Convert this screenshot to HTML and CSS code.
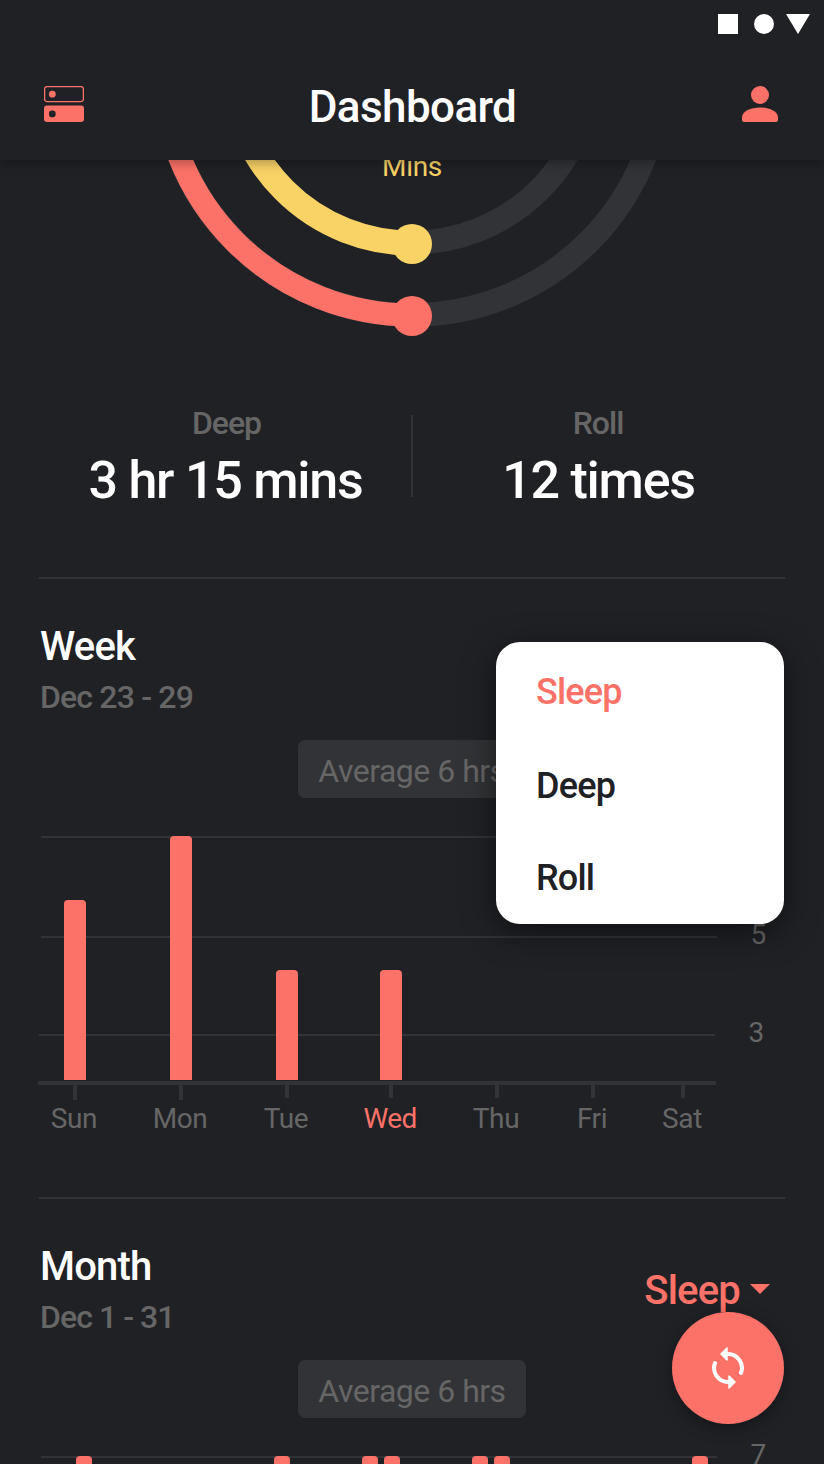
FILE: index.html
```html
<!DOCTYPE html>
<html lang="en">
<head>
<meta charset="utf-8">
<title>Dashboard</title>
<link rel="stylesheet" href="styles.css">
</head>
<body>
<div class="screen">
  <header class="header">
    <div class="status">
      <svg width="92" height="20" viewBox="0 0 92 20" fill="#fff"><path d="M0 0h20v20H0z"/><circle cx="46" cy="10" r="10"/><path d="M68 0h24L80 20z"/></svg>
    </div>
    <div class="toolbar">
      <svg class="icon-menu" width="40" height="36" viewBox="0 0 40 36"><rect x=".6" y=".6" width="38.800" height="15" rx="2.500" class="line"/><circle cx="8.300" cy="8.200" r="3.400" class="coral"/><rect y="19.500" width="40" height="16.500" rx="3" class="coral"/><circle cx="8.300" cy="27.900" r="3.400" class="hole"/></svg>
      <h1 class="title">Dashboard</h1>
      <svg class="icon-user" width="36" height="36" viewBox="0 0 36 36"><circle cx="18" cy="9" r="9" class="coral"/><path class="coral" d="M2 36Q0 36 0 34V31.500C0 25 9 21.500 18 21.500S36 25 36 31.500V34Q36 36 34 36Z"/></svg>
    </div>
  </header>
  <main class="content">
    <svg class="rings" width="824" height="180" viewBox="0 160 824 180" fill="none">
      <g stroke="#323336" stroke-width="24"><circle cx="412" cy="65" r="250"/><circle cx="412" cy="62" r="180.500"/></g>
      <path d="M162 65A250 250 0 0 0 412 315" stroke="#fd7268" stroke-width="23"/>
      <path d="M231 62A181 181 0 0 0 412 243" stroke="#fad367" stroke-width="25"/>
      <circle cx="412" cy="316" r="20" fill="#fd7268"/>
      <circle cx="412" cy="244" r="20" fill="#fad367"/>
      <text class="unit" x="412" y="176" text-anchor="middle">Mins</text>
    </svg>
    <section class="stats">
      <div class="stat"><p class="stat-name">Deep</p><p class="stat-value">3 hr 15 mins</p></div>
      <div class="stat stat-roll"><p class="stat-name">Roll</p><p class="stat-value">12 times</p></div>
    </section>
    <section class="period">
      <div class="period-head"><div><h2 class="name">Week</h2><p class="dates">Dec 23 - 29</p></div></div>
      <p class="average">Average 6 hrs</p>
      <div class="chart">
        <div class="grid">
          <div class="row first"><i></i><span>7</span></div>
          <div class="row second"><i></i><span>5</span></div>
          <div class="row third"><i></i><span>3</span></div>
        </div>
        <div class="bars">
          <b style="height:180px"></b><b style="height:244px"></b><b style="height:110px"></b><b style="height:110px"></b>
        </div>
      </div>
      <div class="axis"></div>
      <div class="days">
        <span class="long">Sun</span><span class="long">Mon</span><span>Tue</span><span class="today">Wed</span><span>Thu</span><span>Fri</span><span>Sat</span>
      </div>
      <ul class="menu"><li class="selected">Sleep</li><li>Deep</li><li>Roll</li></ul>
    </section>
    <section class="period month">
      <div class="period-head">
        <div><h2 class="name">Month</h2><p class="dates">Dec 1 - 31</p></div>
        <div class="picker">Sleep<svg width="20" height="10" viewBox="0 0 20 10"><path d="M0 0h20L10 10z" class="coral"/></svg></div>
      </div>
      <p class="average">Average 6 hrs</p>
      <div class="chart">
        <div class="grid"><div class="row first"><i></i><span>7</span></div></div>
        <div class="bars month-bars"><b></b><b></b><b></b><b></b><b></b><b></b><b></b></div>
      </div>
    </section>
  </main>
  <button class="sync" aria-label="Sync">
    <svg width="32" height="42" viewBox="0 0 32 42"><g fill="none" stroke="#fff" stroke-width="4" stroke-linecap="round"><path d="M14 7H16A14 14 0 0 1 29 26"/><path d="M18 35H16A14 14 0 0 1 3 16"/></g><path fill="#fff" d="M15 1V13L9 7ZM17 29V41L23 35Z" stroke="#fff" stroke-width="1.500" stroke-linejoin="round"/></svg>
  </button>
</div>
</body>
</html>
```
FILE: styles.css
```css
* { box-sizing: border-box; margin: 0; padding: 0; }
body { background: #202125; font-family: Roboto, sans-serif; color: #fff; }
.screen { position: relative; width: 824px; height: 1464px; overflow: hidden; background: #202125; }
.coral { fill: #fd7268; }
.hole { fill: #202125; }
.line { fill: none; stroke: #fd7268; stroke-width: 1.3; }

.header { position: relative; z-index: 2; height: 160px; background: #202125; box-shadow: 0 2px 12px rgba(0, 0, 0, .35); }
.status { display: flex; justify-content: flex-end; height: 48px; padding: 14px 14px 0 0; }
.status svg { display: block; }
.toolbar { display: flex; justify-content: space-between; height: 112px; padding: 38px 46px 0 44px; }
.title { margin: -5px 1px 0 0; font-size: 44px; line-height: 52px; font-weight: 500; letter-spacing: -.6px; }

.rings { display: block; }
.unit { fill: #fad367; font-size: 28px; letter-spacing: -.3px; }

.stats { display: grid; grid-template-columns: 372px 374px; margin: 0 39px; height: 239px; padding-top: 61px; border-bottom: 2px solid #323336; }
.stat { height: 100px; padding-left: 1px; text-align: center; }
.stat-name { margin-top: 3px; padding-left: 2px; font-size: 32px; line-height: 38px; font-weight: 500; color: #666; letter-spacing: -1px; }
.stat-roll .stat-name { padding: 0 1px 0 0; }
.stat-value { margin-top: 8px; font-size: 52px; line-height: 62px; font-weight: 500; letter-spacing: -1.25px; white-space: nowrap; }
.stat-roll { background: linear-gradient(#323336, #323336) 0 14px / 2px 82px no-repeat; }

.period { position: relative; height: 620px; padding-top: 44px; }
.period-head { display: flex; justify-content: space-between; height: 117px; padding: 0 54px 0 40px; }
.name { font-size: 40px; line-height: 47px; font-weight: 500; letter-spacing: -.8px; }
.dates { margin-top: 8px; font-size: 32px; line-height: 38px; font-weight: 500; color: #666; letter-spacing: -.83px; }
.average { width: 228px; height: 58px; margin-left: 298px; border-radius: 7px; background: #323336; color: #666; font-size: 32px; line-height: 62px; text-align: center; letter-spacing: -.5px; }
.chart { display: grid; height: 244px; margin-top: 38px; }
.grid, .bars { grid-area: 1 / 1; }
.row { display: flex; align-items: flex-start; gap: 33.5px; height: 100px; padding-left: 41px; color: #666; font-size: 28px; line-height: 33px; }
.row i { width: 676px; height: 2px; background: #323336; }
.row span { margin-top: -18px; }
.second { height: 98px; }
.third { height: 46px; padding-left: 39px; }
.bars { display: flex; align-items: flex-end; gap: 84px; padding-left: 64px; }
.bars b { width: 22px; border-radius: 4px 4px 0 0; background: #fd7268; }
.bars b:nth-child(4) { margin-left: -2px; }
.axis { width: 678px; height: 4px; margin: 1px 0 0 38px; background: #323336; }
.days { display: grid; grid-template-columns: 106px 106px 106px 102px 110px 82px 98px; margin-left: 22px; color: #666; font-size: 28px; line-height: 33px; text-align: center; letter-spacing: -.4px; }
.days span { padding-right: 2px; }
.days span::before { content: ""; display: block; width: 4px; height: 13px; margin: 0 auto 4px; transform: translateX(1px); background: #323336; }
.days .long::before { height: 15px; margin-bottom: 2px; }
.days .today { color: #fd7268; letter-spacing: -.7px; }

.menu { position: absolute; z-index: 1; left: 496px; top: 63px; width: 288px; height: 282px; padding: 29px 40px 0; border-radius: 24px; background: #fff; box-shadow: 0 8px 32px rgba(0, 0, 0, .5); color: #202125; list-style: none; }
.menu li { height: 94px; font-size: 36px; line-height: 43px; font-weight: 500; letter-spacing: -.8px; }
.menu li:nth-child(2) { height: 92px; }
.menu .selected { color: #fd7268; }

.month::before { content: ""; display: block; height: 2px; margin: -46px 39px 44px; background: #323336; }
.month .dates { letter-spacing: -.95px; }
.picker { display: flex; gap: 10px; margin-top: 24px; color: #fd7268; font-size: 40px; line-height: 47px; font-weight: 500; letter-spacing: -.8px; }
.picker svg { margin-top: 17px; }
.month-bars { gap: 0; padding-left: 76px; }
.month-bars b { width: 16px; height: 244px; }
.month-bars b:nth-child(2) { margin-left: 182px; }
.month-bars b:nth-child(3), .month-bars b:nth-child(5) { margin-left: 72px; }
.month-bars b:nth-child(4), .month-bars b:nth-child(6) { margin-left: 6px; }
.month-bars b:nth-child(7) { margin-left: 182px; }

.sync { position: absolute; z-index: 3; left: 672px; top: 1312px; display: grid; place-items: center; width: 112px; height: 112px; border: 0; border-radius: 50%; background: #fd7268; box-shadow: 0 4px 16px rgba(0, 0, 0, .35); }
```
